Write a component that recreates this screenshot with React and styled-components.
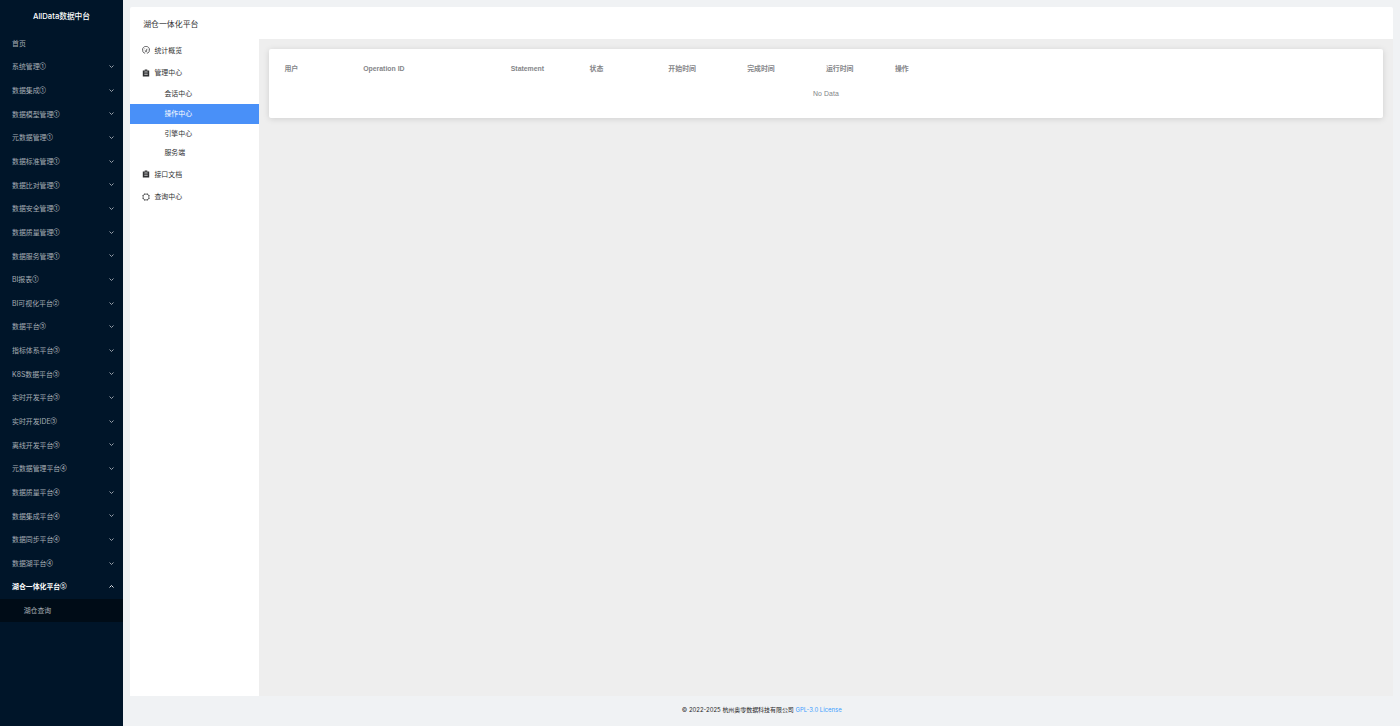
import styled, { createGlobalStyle } from 'styled-components';

const GlobalStyle = createGlobalStyle`
  * {
    box-sizing: border-box;
  }
  body {
    margin: 0;
    background: #f0f2f4;
    font-family: 'Inter', 'Noto Sans CJK SC', sans-serif;
    font-size: 6.9px;
  }
`;

const Layout = styled.div`
  display: flex;
  height: 726px;
  overflow: hidden;
`;

const Sider = styled.aside`
  flex: none;
  width: 123px;
  background: #001529;
  color: #a6adb4;
`;

const Brand = styled.h1`
  margin: 0;
  height: 31.2px;
  line-height: 33px;
  text-align: center;
  font-size: 7.7px;
  font-weight: 500;
  color: #ffffff;
`;

const SideItem = styled.div`
  display: flex;
  align-items: center;
  justify-content: space-between;
  height: 23.65px;
  padding: 0 9px 0 12px;
  line-height: 12px;
  white-space: nowrap;
  font-weight: ${({ $active }) => ($active ? 700 : 400)};
  color: ${({ $active }) => ($active ? '#ffffff' : '#a6adb4')};
`;

const Label = styled.div`
  padding-top: 1.5px;
`;

const Level = styled.span`
  font-family: 'Inter', sans-serif;
  font-size: 4.5px;
  font-weight: 600;
  line-height: 1;
  vertical-align: 1px;
`;

const Arrow = styled.svg`
  width: 5px;
  height: 5px;
  transform: ${({ $up }) => ($up ? 'rotate(180deg)' : 'none')};
`;

const SubItem = styled.div`
  height: 23.65px;
  line-height: 23.65px;
  padding-left: 23.7px;
  background: #000c17;
`;

const Main = styled.main`
  flex: 1;
  display: flex;
  flex-direction: column;
  padding: 7px 7px 0 7.4px;
`;

const Header = styled.header`
  height: 32px;
  line-height: 34px;
  padding-left: 12.8px;
  border-radius: 2px 2px 0 0;
  background: #ffffff;
  font-size: 7.9px;
  color: #303133;
`;

const Body = styled.div`
  display: flex;
  height: 657px;
`;

const Nav = styled.nav`
  flex: none;
  width: 128.2px;
  background: #ffffff;
  color: #303133;
`;

const NavItem = styled.div`
  display: flex;
  align-items: center;
  gap: 4.3px;
  height: 22.65px;
  padding-left: 11.8px;
  line-height: 11px;
  svg {
    width: 8px;
    height: 8px;
  }
`;

const NavSub = styled.div`
  height: 19.7px;
  line-height: 20.9px;
  padding-left: 34.1px;
  color: ${({ $active }) => ($active ? '#ffffff' : '#303133')};
  background: ${({ $active }) => ($active ? '#4990f8' : 'transparent')};
`;

const Content = styled.section`
  flex: 1;
  padding: 10px 9.7px 10px 10px;
  background: #eeeeee;
`;

const Card = styled.div`
  height: 69px;
  padding: 10px;
  border-radius: 2px;
  background: #ffffff;
  box-shadow: 0 1px 6px rgba(0, 0, 0, 0.13);
  font-family: 'Liberation Sans', 'Noto Sans CJK SC', sans-serif;
`;

const TableHead = styled.div`
  display: grid;
  grid-template-columns: 78.8px 147.6px 78.8px 78.8px 78.8px 78.8px 69px 1fr;
  height: 20px;
  line-height: 20px;
  font-weight: 600;
  color: #858689;
  span {
    padding-left: 5.8px;
  }
`;

const Empty = styled.div`
  height: 29px;
  line-height: 29px;
  text-align: center;
  letter-spacing: 0.1px;
  color: #828487;
`;

const Footer = styled.footer`
  line-height: 28px;
  text-align: center;
  font-size: 5.96px;
  color: #262626;
  a {
    color: #409eff;
  }
`;

const menus = [
  ['首页'],
  ['系统管理', '①'],
  ['数据集成', '①'],
  ['数据模型管理', '①'],
  ['元数据管理', '①'],
  ['数据标准管理', '①'],
  ['数据比对管理', '①'],
  ['数据安全管理', '①'],
  ['数据质量管理', '①'],
  ['数据服务管理', '①'],
  ['BI报表', '①'],
  ['BI可视化平台', '②'],
  ['数据平台', '③'],
  ['指标体系平台', '③'],
  ['K8S数据平台', '③'],
  ['实时开发平台', '③'],
  ['实时开发IDE', '③'],
  ['离线开发平台', '③'],
  ['元数据管理平台', '④'],
  ['数据质量平台', '④'],
  ['数据集成平台', '④'],
  ['数据同步平台', '④'],
  ['数据湖平台', '④'],
  ['湖仓一体化平台', '⑤'],
];

const columns = ['用户', 'Operation ID', 'Statement', '状态', '开始时间', '完成时间', '运行时间', '操作'];

const GaugeIcon = () => (
  <svg viewBox='0 0 16 16' fill='none' stroke='#303133' strokeWidth='1.4'>
    <path d='M4.2 14A7.2 7.2 0 1 1 11.8 14' />
    <path d='M4 14h2.4M9.6 14H12M8.4 9.5L10 5.5M3.2 8.2h1.4M11.6 8.2H13M4.8 4.4l.9.9' />
    <circle cx='8' cy='10.4' r='1.1' />
  </svg>
);

const ClipboardIcon = () => (
  <svg viewBox='0 0 16 16'>
    <path fill='#303133' d='M1.6 2.8h3.8V1h5.2v1.8h3.8V15H1.6z' />
    <path stroke='#ffffff' strokeWidth='1.1' d='M5 4.5h6M4.6 7.8h6.8M4.6 11h6.8' />
  </svg>
);

const ChipIcon = () => (
  <svg viewBox='0 0 16 16' fill='none' stroke='#303133' strokeWidth='1.5'>
    <path d='M5 2.2h6L13.8 5v6L11 13.8H5L2.2 11V5z' />
    <path d='M5 1.2v2M11 1.2v2M5 12.8v2M11 12.8v2M1.2 5h2M1.2 11h2M12.8 5h2M12.8 11h2' />
  </svg>
);

const App = () => {
  return (
    <Layout>
      <GlobalStyle />
      <Sider>
        <Brand>AllData数据中台</Brand>
        {menus.map(([name, level]) => {
          const active = level === '⑤';
          return (
            <SideItem key={name} $active={active}>
              <Label>
                {name}
                {level && <Level>{level}</Level>}
              </Label>
              {level && (
                <Arrow $up={active} viewBox='0 0 10 10' fill='none' stroke='currentColor' strokeWidth='1.8'>
                  <path d='M1 3l4 4 4-4' />
                </Arrow>
              )}
            </SideItem>
          );
        })}
        <SubItem>湖仓查询</SubItem>
      </Sider>
      <Main>
        <Header>湖仓一体化平台</Header>
        <Body>
          <Nav>
            <NavItem>
              <GaugeIcon />
              统计概览
            </NavItem>
            <NavItem>
              <ClipboardIcon />
              管理中心
            </NavItem>
            <NavSub>会话中心</NavSub>
            <NavSub $active>操作中心</NavSub>
            <NavSub>引擎中心</NavSub>
            <NavSub>服务端</NavSub>
            <NavItem>
              <ClipboardIcon />
              接口文档
            </NavItem>
            <NavItem>
              <ChipIcon />
              查询中心
            </NavItem>
          </Nav>
          <Content>
            <Card>
              <TableHead>
                {columns.map((col) => (
                  <span key={col}>{col}</span>
                ))}
              </TableHead>
              <Empty>No Data</Empty>
            </Card>
          </Content>
        </Body>
        <Footer>
          © 2022-2025 杭州奥零数据科技有限公司 <a>GPL-3.0 License</a>
        </Footer>
      </Main>
    </Layout>
  );
};

export default App;
